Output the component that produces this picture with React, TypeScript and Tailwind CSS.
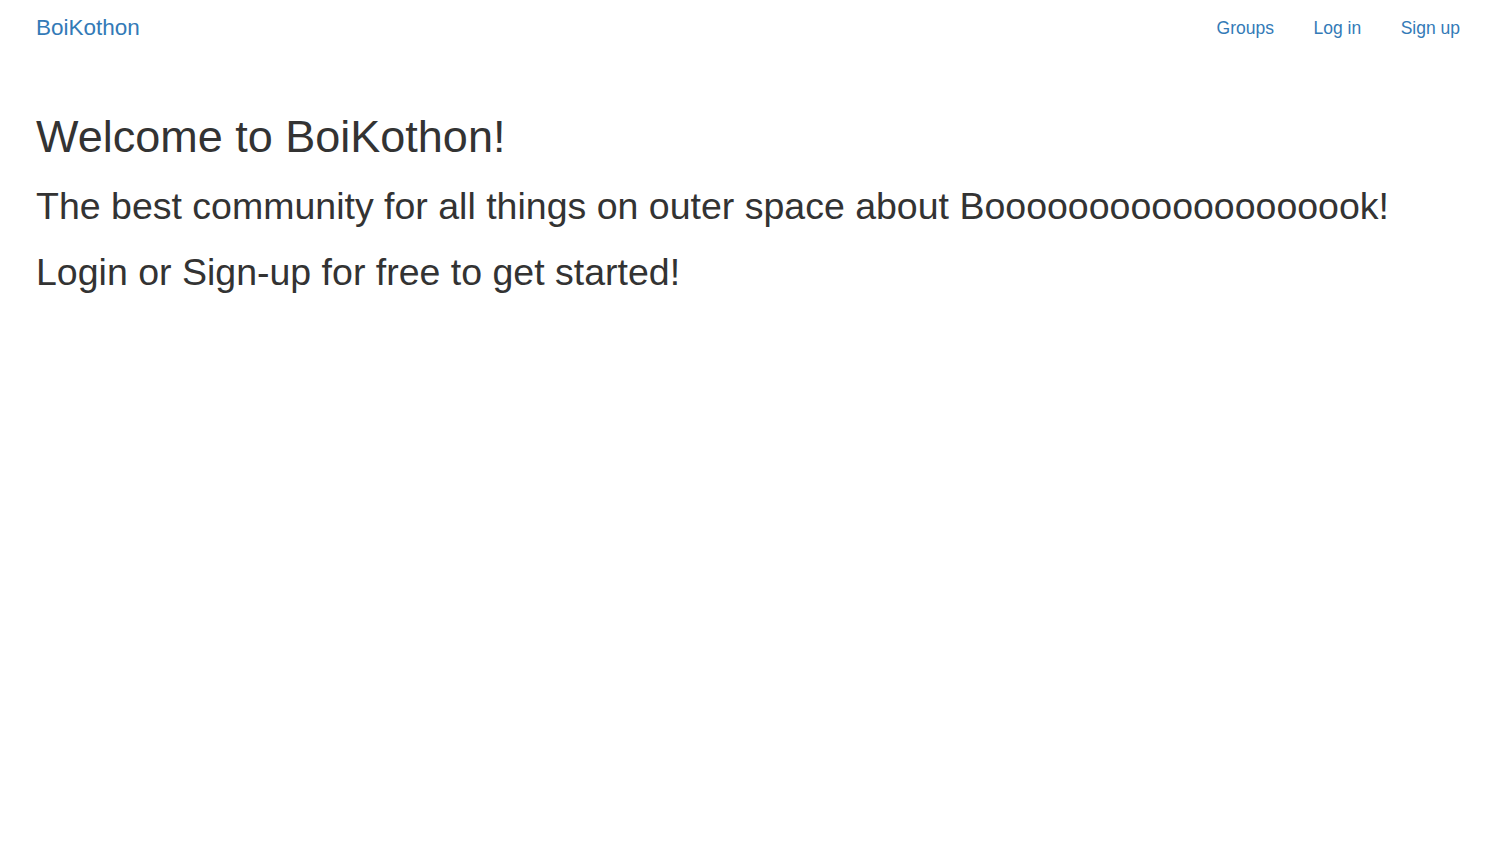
const links = ['Groups', 'Log in', 'Sign up']

export default function App() {
  return (
    <div className="min-h-screen bg-white font-['Liberation_Sans',Arial,sans-serif] text-[#333333]">
      {/* Navbar */}
      <nav className="mb-[24px] flex h-[62.5px] items-center justify-between pb-[8px] pl-[36px] pr-[33px]">
        <a className="text-[22.5px] leading-[25px] text-[#337ab7]" href="#">
          BoiKothon
        </a>
        <ul className="flex items-center gap-[39.5px] pt-[2px]">
          {links.map((l) => (
            <li key={l}>
              <a className="text-[17.5px] leading-[25px] text-[#337ab7]" href="#">
                {l}
              </a>
            </li>
          ))}
        </ul>
      </nav>

      {/* Content */}
      <main className="flow-root px-[36px]">
        <h1 className="mt-[25px] mb-[12.5px] text-[45px] leading-[1.1] font-normal">
          Welcome to BoiKothon!
        </h1>
        <h2 className="mt-[25px] mb-[12.5px] text-[37.5px] leading-[1.1] font-normal">
          The best community for all things on outer space about Booooooooooooooooook!
        </h2>
        <h2 className="mt-[25px] mb-[12.5px] text-[37.5px] leading-[1.1] font-normal">
          Login or Sign-up for free to get started!
        </h2>
      </main>
    </div>
  )
}
